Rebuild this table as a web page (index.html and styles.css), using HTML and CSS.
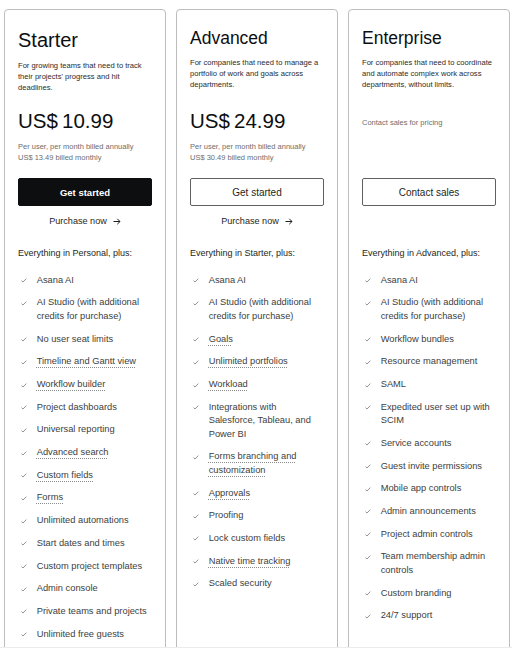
FILE: index.html
```html
<!DOCTYPE html>
<html lang="en">
<head>
<meta charset="utf-8">
<title>Asana plans</title>
<link rel="stylesheet" href="styles.css">
</head>
<body>
<div class="page">
  <section class="card">
    <div class="head">
      <h2 class="title title-lg">Starter</h2>
      <p class="desc">For growing teams that need to track their projects' progress and hit deadlines.</p>
    </div>
    <div class="pricing">
      <div class="price">US$&#8201;10.99</div>
      <p class="billing">Per user, per month billed annually<br>US$ 13.49 billed monthly</p>
    </div>
    <a class="btn btn-dark">Get started</a>
    <div class="purchase"><span>Purchase now</span><svg class="arrow" width="8" height="7" viewBox="0 0 8 7"><path d="M0.5 3.5H7M4.3 0.8L7 3.5L4.3 6.2" fill="none" stroke="#1e1f21" stroke-width="1"/></svg></div>
    <p class="label">Everything in Personal, plus:</p>
    <ul class="features">
      <li><svg class="check" width="6" height="5" viewBox="0 0 6 5"><path d="M0.5 2.6L2 4L5.3 0.6" fill="none" stroke="#777" stroke-width="0.8"/></svg><span>Asana AI</span></li>
      <li><svg class="check" width="6" height="5" viewBox="0 0 6 5"><path d="M0.5 2.6L2 4L5.3 0.6" fill="none" stroke="#777" stroke-width="0.8"/></svg><span>AI Studio (with additional credits for purchase)</span></li>
      <li><svg class="check" width="6" height="5" viewBox="0 0 6 5"><path d="M0.5 2.6L2 4L5.3 0.6" fill="none" stroke="#777" stroke-width="0.8"/></svg><span>No user seat limits</span></li>
      <li><svg class="check" width="6" height="5" viewBox="0 0 6 5"><path d="M0.5 2.6L2 4L5.3 0.6" fill="none" stroke="#777" stroke-width="0.8"/></svg><span><span class="tip">Timeline and Gantt view</span></span></li>
      <li><svg class="check" width="6" height="5" viewBox="0 0 6 5"><path d="M0.5 2.6L2 4L5.3 0.6" fill="none" stroke="#777" stroke-width="0.8"/></svg><span><span class="tip">Workflow builder</span></span></li>
      <li><svg class="check" width="6" height="5" viewBox="0 0 6 5"><path d="M0.5 2.6L2 4L5.3 0.6" fill="none" stroke="#777" stroke-width="0.8"/></svg><span>Project dashboards</span></li>
      <li><svg class="check" width="6" height="5" viewBox="0 0 6 5"><path d="M0.5 2.6L2 4L5.3 0.6" fill="none" stroke="#777" stroke-width="0.8"/></svg><span>Universal reporting</span></li>
      <li><svg class="check" width="6" height="5" viewBox="0 0 6 5"><path d="M0.5 2.6L2 4L5.3 0.6" fill="none" stroke="#777" stroke-width="0.8"/></svg><span><span class="tip">Advanced search</span></span></li>
      <li><svg class="check" width="6" height="5" viewBox="0 0 6 5"><path d="M0.5 2.6L2 4L5.3 0.6" fill="none" stroke="#777" stroke-width="0.8"/></svg><span><span class="tip">Custom fields</span></span></li>
      <li><svg class="check" width="6" height="5" viewBox="0 0 6 5"><path d="M0.5 2.6L2 4L5.3 0.6" fill="none" stroke="#777" stroke-width="0.8"/></svg><span><span class="tip">Forms</span></span></li>
      <li><svg class="check" width="6" height="5" viewBox="0 0 6 5"><path d="M0.5 2.6L2 4L5.3 0.6" fill="none" stroke="#777" stroke-width="0.8"/></svg><span>Unlimited automations</span></li>
      <li><svg class="check" width="6" height="5" viewBox="0 0 6 5"><path d="M0.5 2.6L2 4L5.3 0.6" fill="none" stroke="#777" stroke-width="0.8"/></svg><span>Start dates and times</span></li>
      <li><svg class="check" width="6" height="5" viewBox="0 0 6 5"><path d="M0.5 2.6L2 4L5.3 0.6" fill="none" stroke="#777" stroke-width="0.8"/></svg><span>Custom project templates</span></li>
      <li><svg class="check" width="6" height="5" viewBox="0 0 6 5"><path d="M0.5 2.6L2 4L5.3 0.6" fill="none" stroke="#777" stroke-width="0.8"/></svg><span>Admin console</span></li>
      <li><svg class="check" width="6" height="5" viewBox="0 0 6 5"><path d="M0.5 2.6L2 4L5.3 0.6" fill="none" stroke="#777" stroke-width="0.8"/></svg><span>Private teams and projects</span></li>
      <li><svg class="check" width="6" height="5" viewBox="0 0 6 5"><path d="M0.5 2.6L2 4L5.3 0.6" fill="none" stroke="#777" stroke-width="0.8"/></svg><span>Unlimited free guests</span></li>
    </ul>
  </section>

  <section class="card">
    <div class="head">
      <h2 class="title">Advanced</h2>
      <p class="desc">For companies that need to manage a portfolio of work and goals across departments.</p>
    </div>
    <div class="pricing">
      <div class="price">US$&#8201;24.99</div>
      <p class="billing">Per user, per month billed annually<br>US$ 30.49 billed monthly</p>
    </div>
    <a class="btn btn-outline">Get started</a>
    <div class="purchase"><span>Purchase now</span><svg class="arrow" width="8" height="7" viewBox="0 0 8 7"><path d="M0.5 3.5H7M4.3 0.8L7 3.5L4.3 6.2" fill="none" stroke="#1e1f21" stroke-width="1"/></svg></div>
    <p class="label">Everything in Starter, plus:</p>
    <ul class="features">
      <li><svg class="check" width="6" height="5" viewBox="0 0 6 5"><path d="M0.5 2.6L2 4L5.3 0.6" fill="none" stroke="#777" stroke-width="0.8"/></svg><span>Asana AI</span></li>
      <li><svg class="check" width="6" height="5" viewBox="0 0 6 5"><path d="M0.5 2.6L2 4L5.3 0.6" fill="none" stroke="#777" stroke-width="0.8"/></svg><span>AI Studio (with additional credits for purchase)</span></li>
      <li><svg class="check" width="6" height="5" viewBox="0 0 6 5"><path d="M0.5 2.6L2 4L5.3 0.6" fill="none" stroke="#777" stroke-width="0.8"/></svg><span><span class="tip">Goals</span></span></li>
      <li><svg class="check" width="6" height="5" viewBox="0 0 6 5"><path d="M0.5 2.6L2 4L5.3 0.6" fill="none" stroke="#777" stroke-width="0.8"/></svg><span><span class="tip">Unlimited portfolios</span></span></li>
      <li><svg class="check" width="6" height="5" viewBox="0 0 6 5"><path d="M0.5 2.6L2 4L5.3 0.6" fill="none" stroke="#777" stroke-width="0.8"/></svg><span><span class="tip">Workload</span></span></li>
      <li><svg class="check" width="6" height="5" viewBox="0 0 6 5"><path d="M0.5 2.6L2 4L5.3 0.6" fill="none" stroke="#777" stroke-width="0.8"/></svg><span>Integrations with Salesforce, Tableau, and Power BI</span></li>
      <li><svg class="check" width="6" height="5" viewBox="0 0 6 5"><path d="M0.5 2.6L2 4L5.3 0.6" fill="none" stroke="#777" stroke-width="0.8"/></svg><span><span class="tip">Forms branching and customization</span></span></li>
      <li><svg class="check" width="6" height="5" viewBox="0 0 6 5"><path d="M0.5 2.6L2 4L5.3 0.6" fill="none" stroke="#777" stroke-width="0.8"/></svg><span><span class="tip">Approvals</span></span></li>
      <li><svg class="check" width="6" height="5" viewBox="0 0 6 5"><path d="M0.5 2.6L2 4L5.3 0.6" fill="none" stroke="#777" stroke-width="0.8"/></svg><span>Proofing</span></li>
      <li><svg class="check" width="6" height="5" viewBox="0 0 6 5"><path d="M0.5 2.6L2 4L5.3 0.6" fill="none" stroke="#777" stroke-width="0.8"/></svg><span>Lock custom fields</span></li>
      <li><svg class="check" width="6" height="5" viewBox="0 0 6 5"><path d="M0.5 2.6L2 4L5.3 0.6" fill="none" stroke="#777" stroke-width="0.8"/></svg><span><span class="tip">Native time tracking</span></span></li>
      <li><svg class="check" width="6" height="5" viewBox="0 0 6 5"><path d="M0.5 2.6L2 4L5.3 0.6" fill="none" stroke="#777" stroke-width="0.8"/></svg><span>Scaled security</span></li>
    </ul>
  </section>

  <section class="card">
    <div class="head">
      <h2 class="title">Enterprise</h2>
      <p class="desc">For companies that need to coordinate and automate complex work across departments, without limits.</p>
    </div>
    <div class="pricing">
      <p class="note">Contact sales for pricing</p>
    </div>
    <a class="btn btn-outline">Contact sales</a>
    <div class="purchase"></div>
    <p class="label">Everything in Advanced, plus:</p>
    <ul class="features">
      <li><svg class="check" width="6" height="5" viewBox="0 0 6 5"><path d="M0.5 2.6L2 4L5.3 0.6" fill="none" stroke="#777" stroke-width="0.8"/></svg><span>Asana AI</span></li>
      <li><svg class="check" width="6" height="5" viewBox="0 0 6 5"><path d="M0.5 2.6L2 4L5.3 0.6" fill="none" stroke="#777" stroke-width="0.8"/></svg><span>AI Studio (with additional credits for purchase)</span></li>
      <li><svg class="check" width="6" height="5" viewBox="0 0 6 5"><path d="M0.5 2.6L2 4L5.3 0.6" fill="none" stroke="#777" stroke-width="0.8"/></svg><span>Workflow bundles</span></li>
      <li><svg class="check" width="6" height="5" viewBox="0 0 6 5"><path d="M0.5 2.6L2 4L5.3 0.6" fill="none" stroke="#777" stroke-width="0.8"/></svg><span>Resource management</span></li>
      <li><svg class="check" width="6" height="5" viewBox="0 0 6 5"><path d="M0.5 2.6L2 4L5.3 0.6" fill="none" stroke="#777" stroke-width="0.8"/></svg><span>SAML</span></li>
      <li><svg class="check" width="6" height="5" viewBox="0 0 6 5"><path d="M0.5 2.6L2 4L5.3 0.6" fill="none" stroke="#777" stroke-width="0.8"/></svg><span>Expedited user set up with SCIM</span></li>
      <li><svg class="check" width="6" height="5" viewBox="0 0 6 5"><path d="M0.5 2.6L2 4L5.3 0.6" fill="none" stroke="#777" stroke-width="0.8"/></svg><span>Service accounts</span></li>
      <li><svg class="check" width="6" height="5" viewBox="0 0 6 5"><path d="M0.5 2.6L2 4L5.3 0.6" fill="none" stroke="#777" stroke-width="0.8"/></svg><span>Guest invite permissions</span></li>
      <li><svg class="check" width="6" height="5" viewBox="0 0 6 5"><path d="M0.5 2.6L2 4L5.3 0.6" fill="none" stroke="#777" stroke-width="0.8"/></svg><span>Mobile app controls</span></li>
      <li><svg class="check" width="6" height="5" viewBox="0 0 6 5"><path d="M0.5 2.6L2 4L5.3 0.6" fill="none" stroke="#777" stroke-width="0.8"/></svg><span>Admin announcements</span></li>
      <li><svg class="check" width="6" height="5" viewBox="0 0 6 5"><path d="M0.5 2.6L2 4L5.3 0.6" fill="none" stroke="#777" stroke-width="0.8"/></svg><span>Project admin controls</span></li>
      <li><svg class="check" width="6" height="5" viewBox="0 0 6 5"><path d="M0.5 2.6L2 4L5.3 0.6" fill="none" stroke="#777" stroke-width="0.8"/></svg><span>Team membership admin controls</span></li>
      <li><svg class="check" width="6" height="5" viewBox="0 0 6 5"><path d="M0.5 2.6L2 4L5.3 0.6" fill="none" stroke="#777" stroke-width="0.8"/></svg><span>Custom branding</span></li>
      <li><svg class="check" width="6" height="5" viewBox="0 0 6 5"><path d="M0.5 2.6L2 4L5.3 0.6" fill="none" stroke="#777" stroke-width="0.8"/></svg><span>24/7 support</span></li>
    </ul>
  </section>
</div>
</body>
</html>
```

FILE: styles.css
```css
* { box-sizing: border-box; }

html, body {
  margin: 0;
  padding: 0;
  background: #ffffff;
}

body {
  font-family: "Liberation Sans", Arial, sans-serif;
  color: #1e1f21;
}

.page {
  display: flex;
  align-items: flex-start;
  gap: 10px;
  height: 648px;
  padding: 9px 2px 0 4px;
  overflow: hidden;
  border-bottom: 1px solid #ececec;
}

.card {
  flex: 0 0 162px;
  width: 162px;
  min-height: 700px;
  border: 1px solid #bdbdbd;
  border-radius: 4px;
  padding: 18px 13px 0;
}

.head {
  height: 81px;
}

.title {
  margin: 0;
  font-size: 17.5px;
  line-height: 21px;
  font-weight: 400;
  color: #0d0e10;
}

.title-lg {
  font-size: 20px;
  line-height: 24px;
}

.desc {
  margin: 8px 0 0;
  font-size: 7.6px;
  line-height: 11px;
  color: #2a2b2d;
}

.pricing {
  display: flow-root;
  height: 69px;
}

.price {
  font-size: 20.5px;
  line-height: 24px;
  color: #0d0e10;
}

.billing,
.note {
  margin: 7.5px 0 0;
  font-size: 7.5px;
  line-height: 11px;
  color: #6d6e6f;
}

.btn {
  display: flex;
  align-items: center;
  justify-content: center;
  height: 28px;
  border-radius: 2px;
  font-size: 10px;
  cursor: pointer;
}

.btn-dark {
  background: #0d0e10;
  color: #ffffff;
  font-weight: 700;
  font-size: 9.5px;
  border: 1px solid #0d0e10;
}

.btn-outline {
  background: #ffffff;
  color: #1e1f21;
  border: 1px solid #5f6061;
}

.purchase {
  display: flex;
  align-items: center;
  justify-content: center;
  gap: 6px;
  margin-top: 8.5px;
  height: 13px;
  font-size: 9.1px;
  line-height: 13px;
  color: #1e1f21;
}

.arrow {
  display: block;
}

.label {
  margin: 19px 0 0;
  font-size: 9px;
  line-height: 13px;
  color: #1e1f21;
}

.features {
  list-style: none;
  margin: 14.25px 0 0;
  padding: 0;
  display: flex;
  flex-direction: column;
  gap: 9.2px;
}

.features li {
  display: grid;
  grid-template-columns: 18.7px 1fr;
  font-size: 9.3px;
  line-height: 13.5px;
  color: #3d3e40;
}

.check {
  display: block;
  margin: 4.5px 0 0 3px;
}

.tip {
  text-decoration: underline dotted #8a8b8c;
  text-decoration-thickness: 1px;
  text-underline-offset: 2.5px;
}
```
